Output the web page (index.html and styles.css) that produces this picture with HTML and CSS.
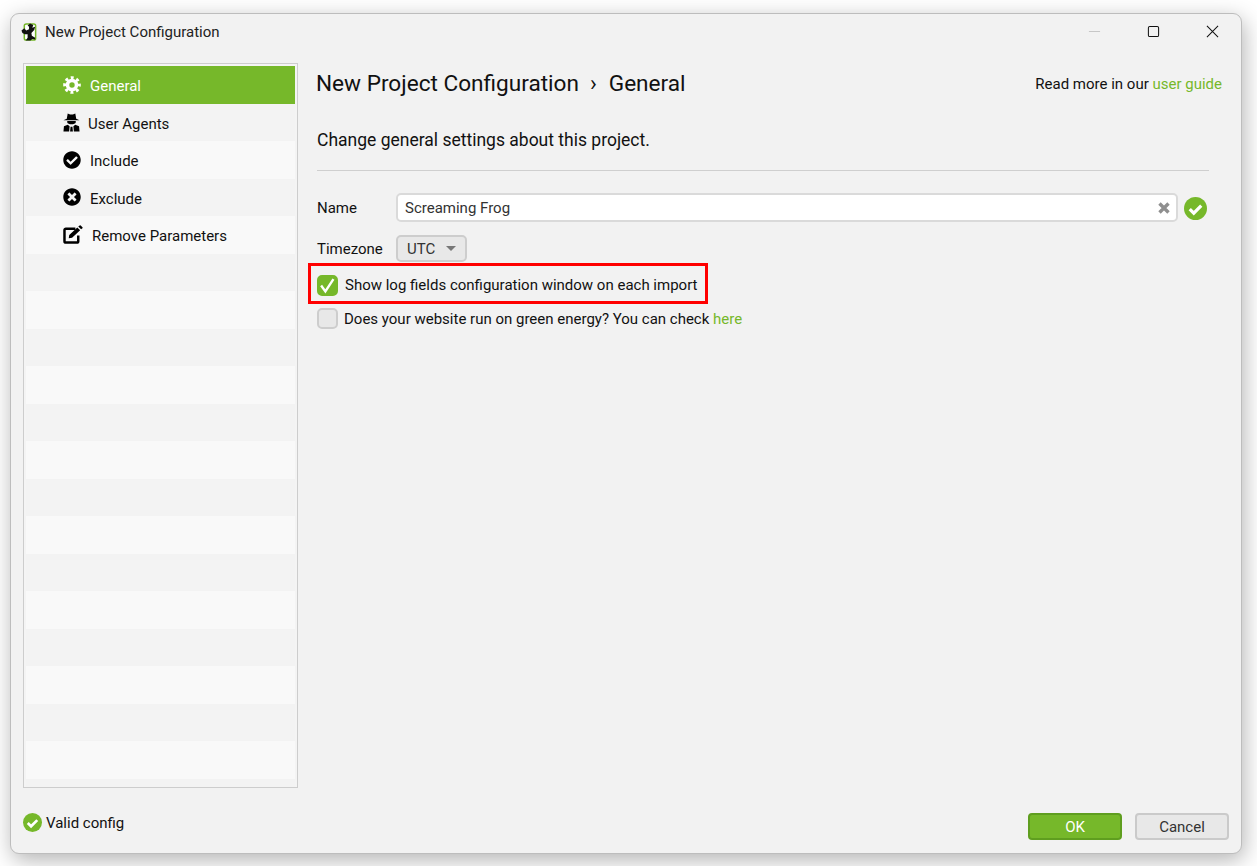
FILE: index.html
```html
<html>

<head>
    <link rel="stylesheet" href="styles.css">
</head>
<body>
    <div class="window">
        <div class="titlebar">
            <svg class="logo" viewBox="0 0 18 20">
                <rect x="3.5" y="1.5" width="12" height="17" rx="2" fill="#fff" stroke="#76b82a" stroke-width="1.6" />
                <path d="M0.5 8.5 L3.5 6 L5.5 8.5 L8.5 7 L8.5 4.5 L7 3 L9.5 1 L13 2.5 L12 5.5 L15 4.5 L14 8 L11 11 L11.5 14 L15 16 L15 18 L12 17.5 L10 19 L5 19 L7 16 L7 12.5 L4 12.5 L1.5 11 Z" fill="#111" />
            </svg>
            <span class="title">New Project Configuration</span>
            <div class="window-buttons">
                <svg viewBox="0 0 14 14"><path d="M1 7 H13" stroke="#c4c4c4" fill="none" /></svg>
                <svg viewBox="0 0 14 14"><rect x="1.5" y="1.5" width="11" height="11" rx="1.5" stroke="#111" stroke-width="1.1" fill="none" /></svg>
                <svg viewBox="0 0 14 14"><path d="M1 1 L13 13 M13 1 L1 13" stroke="#111" stroke-width="1.1" fill="none" /></svg>
            </div>
        </div>

        <div class="main">
            <div class="sidebar">
                <div class="menu-item selected">
                    <svg class="menu-icon" viewBox="0 0 20 20">
                        <circle cx="10" cy="10" r="5" fill="none" stroke="#fff" stroke-width="4" />
                        <circle cx="10" cy="10" r="8" fill="none" stroke="#fff" stroke-width="3.6" stroke-dasharray="3.2 3.08" stroke-dashoffset="1.6" />
                    </svg>
                    <span class="menu-label">General</span>
                </div>
                <div class="menu-item">
                    <svg class="menu-icon agents" viewBox="0 0 18 20">
                        <path d="M5 0.5 L7.5 1.5 L10.5 1.5 L13 0.5 L14 6 L17.5 7.5 L0.5 7.5 L4 6 Z M4.5 8.5 H13.5 V10 C13 12.5 5 12.5 4.5 10 Z" fill="#000" />
                        <path d="M0.5 19.5 L1 14 L5 12.5 L7 14 L6.5 19.5 Z M17.5 19.5 L17 14 L13 12.5 L11 14 L11.5 19.5 Z M8 14.5 H10 L10.5 19.5 H7.5 Z" fill="#000" />
                    </svg>
                    <span class="menu-label label-agents">User Agents</span>
                </div>
                <div class="menu-item">
                    <svg class="menu-icon" viewBox="0 0 512 512">
                        <path d="M504 256c0 136.967-111.033 248-248 248S8 392.967 8 256 119.033 8 256 8s248 111.033 248 248zM227.314 387.314l184-184c6.248-6.248 6.248-16.379 0-22.627l-22.627-22.627c-6.248-6.249-16.379-6.249-22.628 0L216 308.118l-70.059-70.059c-6.248-6.248-16.379-6.248-22.628 0l-22.627 22.627c-6.248 6.248-6.248 16.379 0 22.627l104 104c6.249 6.249 16.379 6.249 22.628.001z" fill="#000" />
                    </svg>
                    <span class="menu-label">Include</span>
                </div>
                <div class="menu-item">
                    <svg class="menu-icon" viewBox="0 0 512 512">
                        <path d="M256 8C119 8 8 119 8 256s111 248 248 248 248-111 248-248S393 8 256 8zm121.6 313.1c4.7 4.7 4.7 12.3 0 17L338 377.6c-4.7 4.7-12.3 4.7-17 0L256 312l-65.1 65.6c-4.7 4.7-12.3 4.7-17 0L134.4 338c-4.7-4.7-4.7-12.3 0-17l65.6-65-65.6-65.1c-4.7-4.7-4.7-12.3 0-17l39.6-39.6c4.7-4.7 12.3-4.7 17 0l65 65.7 65.1-65.6c4.7-4.7 12.3-4.7 17 0l39.6 39.6c4.7 4.7 4.7 12.3 0 17L312 256l65.6 65.1z" fill="#000" />
                    </svg>
                    <span class="menu-label label-exclude">Exclude</span>
                </div>
                <div class="menu-item">
                    <svg class="menu-icon edit" viewBox="0 0 22 20">
                        <path d="M13 4 H3 A1.5 1.5 0 0 0 1.5 5.5 V17 A1.5 1.5 0 0 0 3 18.5 H14.5 A1.5 1.5 0 0 0 16 17 V11" fill="none" stroke="#000" stroke-width="2.6" />
                        <path d="M6.5 10.5 L15 2.5 L18 5.5 L9.5 13.5 L6 14 Z M16 1.5 L17.5 0.4 Q18 0 18.6 0.5 L20.4 2.3 Q21 3 20.4 3.5 L19 4.5 Z" fill="#000" />
                    </svg>
                    <span class="menu-label label-params">Remove Parameters</span>
                </div>
                <div class="menu-item"></div>
                <div class="menu-item"></div>
                <div class="menu-item"></div>
                <div class="menu-item"></div>
                <div class="menu-item"></div>
                <div class="menu-item"></div>
                <div class="menu-item"></div>
                <div class="menu-item"></div>
                <div class="menu-item"></div>
                <div class="menu-item"></div>
                <div class="menu-item"></div>
                <div class="menu-item"></div>
                <div class="menu-item"></div>
                <div class="menu-item"></div>
                <div class="menu-item"></div>
            </div>

            <div class="content">
                <div class="content-header">
                    <div class="heading">New Project Configuration<span class="crumb">›</span>General</div>
                    <div class="guide">Read more in our <span class="link">user guide</span></div>
                </div>
                <div class="description">Change general settings about this project.</div>

                <div class="form-row name-row">
                    <div class="field-label">Name</div>
                    <div class="text-field">
                        <span>Screaming Frog</span>
                        <svg class="clear" viewBox="0 0 12 12"><path d="M1.5 1.5 L10.5 10.5 M10.5 1.5 L1.5 10.5" stroke="#8f8f8f" stroke-width="3.4" fill="none" /></svg>
                    </div>
                    <svg class="ok-icon big" viewBox="0 0 20 20">
                        <circle cx="10" cy="10" r="10" fill="#76b82a" />
                        <path d="M5 10.5 L8.5 14 L15 7.5" stroke="#fff" stroke-width="2.8" fill="none" />
                    </svg>
                </div>
                <div class="form-row timezone-row">
                    <div class="field-label">Timezone</div>
                    <div class="combo">UTC<span class="arrow"></span></div>
                </div>
                <div class="check-row highlighted">
                    <div class="checkbox checked">
                        <svg viewBox="0 0 20 20"><path d="M2.5 10 L7.5 17 L17 2.5" stroke="#fff" stroke-width="2.8" fill="none" /></svg>
                    </div>
                    <span>Show log fields configuration window on each import</span>
                </div>
                <div class="check-row green-energy">
                    <div class="checkbox"></div>
                    <span>Does your website run on green energy? You can check <span class="link">here</span></span>
                </div>
            </div>
        </div>

        <div class="footer">
            <div class="status">
                <svg class="ok-icon" viewBox="0 0 20 20">
                    <circle cx="10" cy="10" r="10" fill="#76b82a" />
                    <path d="M5 10.5 L8.5 14 L15 7.5" stroke="#fff" stroke-width="2.8" fill="none" />
                </svg>
                Valid config
            </div>
            <div class="buttons">
                <div class="button primary">OK</div>
                <div class="button">Cancel</div>
            </div>
        </div>
    </div>
</body>

</html>
```
FILE: styles.css
```css
html, body {
    margin: 0;
    height: 866px;
    overflow: hidden;
}

body {
    background-color: #fff;
    padding: 13px 0 0 10px;
    box-sizing: border-box;
    font-family: Roboto, "Liberation Sans", sans-serif;
    font-size: 15px;
    color: #111;
}

.window {
    width: 1232px;
    height: 841px;
    box-sizing: border-box;
    background-color: #f2f2f2;
    border: 1px solid #bdbdbd;
    border-radius: 9px;
    box-shadow: 2px 6px 22px rgba(0, 0, 0, 0.3);
    display: flex;
    flex-direction: column;
}

.titlebar {
    display: flex;
    align-items: center;
    height: 36px;
    padding-left: 10px;
    flex: none;
}

.logo {
    width: 17px;
    height: 20px;
    margin-right: 7px;
}

.title {
    font-size: 15px;
    color: #222;
}

.window-buttons {
    display: flex;
    margin-left: auto;
    margin-right: 22px;
    margin-top: -2px;
    gap: 46px;
}

.window-buttons svg {
    width: 13px;
    height: 13px;
}

.main {
    display: flex;
    flex: none;
    height: 725px;
    margin-top: 13px;
    padding-left: 12px;
}

.sidebar {
    width: 275px;
    height: 725px;
    box-sizing: border-box;
    flex: none;
    background-color: #f9f9f9;
    border: 1px solid #cdcdcd;
    padding: 2px;
    overflow: hidden;
    box-shadow: inset 0 0 0 2px #f4f4f4;
}

.menu-item {
    height: 37.5px;
    display: flex;
    align-items: center;
    padding-left: 37px;
    box-sizing: border-box;
    font-size: 15px;
    color: #111;
}

.menu-item:nth-child(odd) {
    background-color: #f9f9f9;
}

.menu-item:nth-child(even) {
    background-color: #f3f3f3;
}

.menu-item.selected {
    background-color: #76b82a;
    color: #fff;
}

.menu-icon {
    width: 18px;
    height: 18px;
    flex: none;
}

.menu-label {
    margin-left: 9px;
    margin-top: 2px;
}

.agents {
    width: 17px;
    height: 19px;
}

.label-agents {
    margin-left: 8px;
    margin-top: 4px;
}

.label-exclude {
    margin-top: 3px;
}

.label-params {
    margin-left: 8px;
}

.edit {
    width: 21px;
    height: 19px;
}

.content {
    flex: 1;
    padding-left: 19px;
    padding-right: 32px;
    min-width: 0;
}

.content-header {
    display: flex;
    justify-content: space-between;
    align-items: center;
    height: 40px;
}

.heading {
    font-size: 22.6px;
    color: #111;
    margin-left: -1px;
}

.crumb {
    margin: 0 12px 0 11px;
}

.guide {
    margin-right: -13px;
    margin-top: 1px;
    font-size: 15px;
}

.link {
    color: #76b82a;
}

.description {
    margin-top: 25px;
    font-size: 17.5px;
    line-height: 24px;
    padding-bottom: 18px;
    border-bottom: 1px solid #cfcfcf;
}

.form-row {
    display: flex;
    align-items: center;
}

.name-row {
    margin-top: 22px;
    height: 29px;
}

.timezone-row {
    margin-top: 13px;
}

.field-label {
    width: 79px;
    flex: none;
}

.text-field {
    flex: 1;
    height: 29px;
    box-sizing: border-box;
    background-color: #fff;
    border: 2px solid #dadada;
    border-radius: 5px;
    display: flex;
    align-items: center;
    justify-content: space-between;
    padding: 0 6px 0 7px;
    color: #333;
}

.clear {
    width: 12px;
    height: 12px;
}

.ok-icon {
    width: 19px;
    height: 19px;
    flex: none;
}

.ok-icon.big {
    width: 23px;
    height: 23px;
    margin-left: 6px;
    margin-right: 2px;
    margin-top: 1px;
}

.combo {
    width: 71px;
    height: 27px;
    box-sizing: border-box;
    background-color: #e8e8e8;
    border: 2px solid #cdcdcd;
    border-radius: 5px;
    display: flex;
    align-items: center;
    padding-left: 9px;
    color: #333;
}

.arrow {
    width: 0;
    height: 0;
    margin-left: 11px;
    border-left: 5px solid transparent;
    border-right: 5px solid transparent;
    border-top: 5px solid #777;
}

.check-row {
    display: flex;
    align-items: center;
    gap: 6px;
}

.highlighted {
    width: 400px;
    height: 41px;
    box-sizing: border-box;
    margin-top: 1px;
    margin-left: -9px;
    padding-left: 6px;
    padding-top: 3px;
    border: 3px solid #f00;
}

.highlighted .checkbox {
    margin-right: 1px;
}

.green-energy {
    margin-top: 4px;
}

.checkbox {
    width: 21px;
    height: 21px;
    box-sizing: border-box;
    background-color: #e8e8e8;
    border: 2px solid #cdcdcd;
    border-radius: 5px;
    flex: none;
}

.checkbox.checked {
    background-color: #76b82a;
    border-color: #76b82a;
}

.checkbox svg {
    display: block;
    width: 17px;
    height: 17px;
}

.footer {
    display: flex;
    justify-content: space-between;
    align-items: center;
    flex: 1;
    padding: 0 12px;
}

.status {
    display: flex;
    align-items: center;
    gap: 4px;
    margin-top: 4px;
}

.buttons {
    display: flex;
    gap: 13px;
    margin-top: 12px;
}

.button {
    width: 94px;
    height: 27px;
    box-sizing: border-box;
    background-color: #e8e8e8;
    border: 2px solid #cacaca;
    border-radius: 4px;
    display: flex;
    align-items: center;
    justify-content: center;
    color: #333;
}

.button.primary {
    background-color: #76b82a;
    border-color: #5f9e1f;
    color: #fff;
}
```
